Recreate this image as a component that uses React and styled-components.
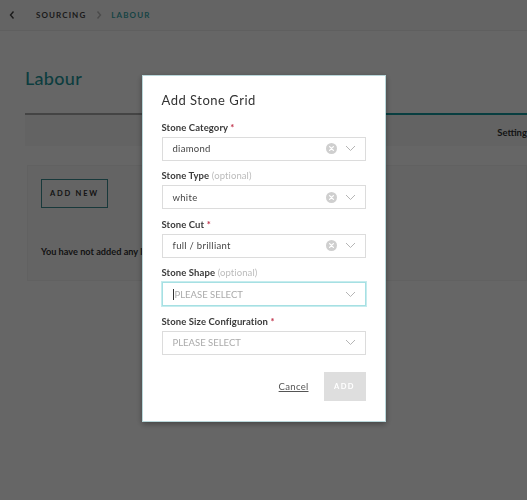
import React from "react";
import styled, { createGlobalStyle } from "styled-components";

const Global = createGlobalStyle`
  html, body { margin: 0; padding: 0; background: #fff; }
  body { font-family: "Lato", "Open Sans", sans-serif; color: #333; }
  * { box-sizing: border-box; }
`;

const Page = styled.div`
  width: 527px;
  height: 500px;
  overflow: hidden;
  background: #fff;
`;

const TopBar = styled.div`
  height: 31px;
  background: #fafafa;
  border-bottom: 1px solid #eee;
  display: flex;
  align-items: center;
  padding-left: 8px;
  font-size: 8px;
  letter-spacing: 1.1px;
  font-weight: 700;
`;

const Crumb = styled.span`
  color: ${(p) => (p.$active ? "#3aa9ab" : "#444")};
  margin-left: ${(p) => p.$ml || 0}px;
`;

const Sep = styled.span`
  margin-left: 9px;
  display: flex;
`;

const Content = styled.div`
  padding: 0 0 0 25px;
`;

const Title = styled.h1`
  margin: 36px 0 0;
  font-size: 18px;
  font-weight: 500;
  color: #1f9a9e;
  letter-spacing: 0.3px;
  height: 46px;
`;

const Tabs = styled.div`
  height: 33px;
  border-top: 2px solid #aaa;
  background: #f7f7f7;
  display: flex;
  justify-content: flex-end;
`;

const Tab = styled.div`
  border-top: 2px solid #159ba0;
  margin-top: -2px;
  width: 142px;
  text-align: right;
  font-size: 9.5px;
  font-weight: 700;
  color: #333;
  padding-top: 12px;
  padding-right: 0;
  white-space: nowrap;
`;

const Panel = styled.div`
  margin: 19px 0 0 2px;
  height: 116px;
  background: #f9f9f9;
  border: 1px solid #f2f2f2;
  padding: 13px 13px;
`;

const OutlineBtn = styled.div`
  width: 67px;
  height: 29px;
  border: 1px solid #3c8f93;
  display: flex;
  align-items: center;
  justify-content: center;
  font-size: 7.5px;
  letter-spacing: 1.8px;
  font-weight: 700;
  color: #333;
`;

const Empty = styled.div`
  margin-top: 38px;
  font-size: 9.2px;
  font-weight: 700;
  color: #333;
  white-space: nowrap;
`;

const Link = styled.span`
  color: #1f9a9e;
  text-decoration: underline;
`;

const Overlay = styled.div`
  position: fixed;
  inset: 0;
  background: rgba(0, 0, 0, 0.6);
  display: flex;
  align-items: center;
  justify-content: center;
`;

const Modal = styled.div`
  width: 244px;
  height: 347px;
  margin-top: -4px;
  background: #fff;
  border: 1px solid #b9d7da;
  box-shadow: 0 2px 6px rgba(0, 0, 0, 0.35);
  padding: 16px 19px 0 19px;
  display: flex;
  flex-direction: column;
`;

const ModalTitle = styled.div`
  font-size: 13px;
  font-weight: 400;
  color: #333;
  letter-spacing: 0.5px;
  margin-bottom: 14px;
`;

const Field = styled.div`
  display: flex;
  flex-direction: column;
  gap: 3px;
  margin-bottom: 9.5px;
`;

const Label = styled.label`
  font-size: 9.5px;
  font-weight: 700;
  color: #3a3a3a;
  letter-spacing: 0.1px;
  height: 12px;
  line-height: 12px;
`;

const Req = styled.span`
  color: #c0324a;
`;

const Opt = styled.span`
  color: #bbb;
  font-weight: 400;
`;

const Select = styled.div`
  height: 24px;
  border: 1px solid ${(p) => (p.$focus ? "#a6e0e3" : "#dcdcdc")};
  box-shadow: ${(p) => (p.$focus ? "0 0 0 1px #c6ecee" : "none")};
  display: flex;
  align-items: center;
  padding: 0 9px 0 10px;
  font-size: 9.5px;
  letter-spacing: ${(p) => (p.$placeholder ? "0" : "0.3px")};
  color: ${(p) => (p.$placeholder ? "#aaa" : "#444")};
`;

const Value = styled.span`
  flex: 1;
  display: flex;
  align-items: center;
`;

const Caret = styled.span`
  width: 1px;
  height: 11px;
  background: #333;
  margin-right: 1px;
`;

const Icons = styled.span`
  display: flex;
  align-items: center;
  gap: 8px;
`;

const Footer = styled.div`
  display: flex;
  justify-content: flex-end;
  align-items: center;
  gap: 15px;
  margin-top: 8px;
`;

const Cancel = styled.span`
  font-size: 9.5px;
  color: #555;
  text-decoration: underline;
  letter-spacing: 0.3px;
`;

const AddBtn = styled.div`
  width: 42px;
  height: 29px;
  background: #dedede;
  color: #fff;
  font-size: 7.5px;
  font-weight: 700;
  letter-spacing: 1.5px;
  display: flex;
  align-items: center;
  justify-content: center;
`;

const ClearIcon = () => (
  <svg width="11" height="11" viewBox="0 0 11 11">
    <circle cx="5.5" cy="5.5" r="5.5" fill="#cfcfcf" />
    <path d="M3.6 3.6 L7.4 7.4 M7.4 3.6 L3.6 7.4" stroke="#fff" strokeWidth="1.3" strokeLinecap="round" />
  </svg>
);

const Chevron = () => (
  <svg width="11" height="7" viewBox="0 0 11 7">
    <path d="M1 1 L5.5 5.5 L10 1" fill="none" stroke="#b5b5b5" strokeWidth="1" />
  </svg>
);

const fields = [
  { label: "Stone Category", req: true, value: "diamond" },
  { label: "Stone Type", opt: true, value: "white" },
  { label: "Stone Cut", req: true, value: "full / brilliant" },
  { label: "Stone Shape", opt: true, placeholder: true, focus: true },
  { label: "Stone Size Configuration", req: true, placeholder: true },
];

export default function App() {
  return (
    <Page>
      <Global />
      <TopBar>
        <svg width="8" height="10" viewBox="0 0 8 10">
          <path d="M5.5 1.5 L2.5 5 L5.5 8.5" fill="none" stroke="#444" strokeWidth="1.4" />
        </svg>
        <Crumb $ml={20}>SOURCING</Crumb>
        <Sep>
          <svg width="8" height="10" viewBox="0 0 8 10">
            <path d="M2.5 1.5 L5.5 5 L2.5 8.5" fill="none" stroke="#bbb" strokeWidth="1.4" />
          </svg>
        </Sep>
        <Crumb $active $ml={8}>LABOUR</Crumb>
      </TopBar>
      <Content>
        <Title>Labour</Title>
        <Tabs>
          <Tab>Setting</Tab>
        </Tabs>
        <Panel>
          <OutlineBtn>ADD NEW</OutlineBtn>
          <Empty>
            You have not added any labour yet. Click <Link>here</Link>
          </Empty>
        </Panel>
      </Content>
      <Overlay>
        <Modal>
          <ModalTitle>Add Stone Grid</ModalTitle>
          {fields.map((f) => (
            <Field key={f.label}>
              <Label>
                {f.label}
                {f.req && <Req> *</Req>}
                {f.opt && <Opt> (optional)</Opt>}
              </Label>
              <Select $focus={f.focus} $placeholder={f.placeholder}>
                <Value>
                  {f.focus && <Caret />}
                  {f.placeholder ? "PLEASE SELECT" : f.value}
                </Value>
                <Icons>
                  {!f.placeholder && <ClearIcon />}
                  <Chevron />
                </Icons>
              </Select>
            </Field>
          ))}
          <Footer>
            <Cancel>Cancel</Cancel>
            <AddBtn>ADD</AddBtn>
          </Footer>
        </Modal>
      </Overlay>
    </Page>
  );
}
